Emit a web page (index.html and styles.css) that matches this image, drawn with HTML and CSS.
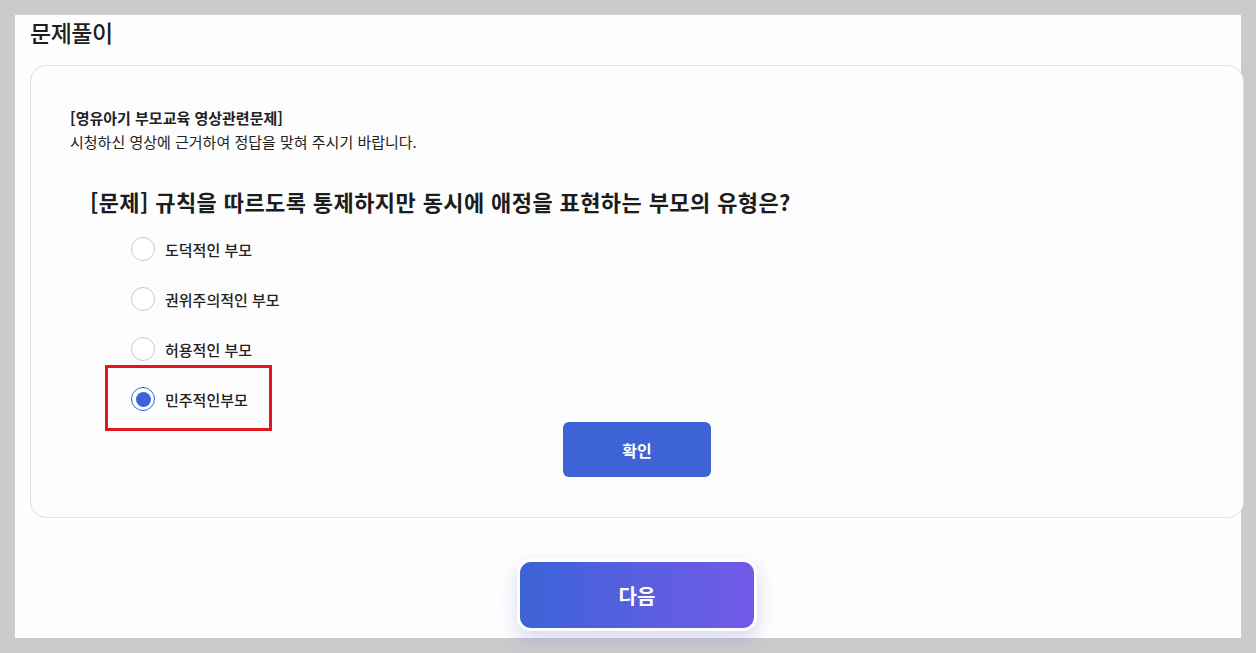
FILE: index.html
```html
<!DOCTYPE html>
<html lang="ko">
<head>
<meta charset="utf-8">
<title>문제풀이</title>
<link rel="stylesheet" href="styles.css">
</head>
<body>
<div class="panel">
  <h1 class="title">문제풀이</h1>
  <section class="card">
    <div class="intro">
      <p class="intro-head">[영유아기 부모교육 영상관련문제]</p>
      <p class="intro-sub">시청하신 영상에 근거하여 정답을 맞혀 주시기 바랍니다.</p>
    </div>
    <h2 class="question">[문제] 규칙을 따르도록 통제하지만 동시에 애정을 표현하는 부모의 유형은?</h2>
    <ul class="options">
      <li class="option"><span class="radio"></span><span class="label">도덕적인 부모</span></li>
      <li class="option"><span class="radio"></span><span class="label">권위주의적인 부모</span></li>
      <li class="option"><span class="radio"></span><span class="label">허용적인 부모</span></li>
      <li class="option selected"><span class="mark"></span><span class="radio"></span><span class="label">민주적인부모</span></li>
    </ul>
    <div class="confirm-row"><button class="confirm">확인</button></div>
  </section>
  <div class="next-row"><button class="next">다음</button></div>
</div>
</body>
</html>
```

FILE: styles.css
```css
* { box-sizing: border-box; }
html, body { margin: 0; padding: 0; }
body {
  background: #cbcbcb;
  padding: 15px;
  font-family: "Noto Sans CJK KR", "Noto Sans", sans-serif;
  color: #222;
}
.panel {
  width: 1226px;
  height: 623px;
  background: #fefefe;
  padding: 0 0 0 15px;
}
.title {
  margin: 0;
  font-size: 23px;
  font-weight: 500;
  line-height: 34px;
  color: #1f1f1f;
  letter-spacing: -0.5px;
}
.card {
  margin-top: 16px;
  width: 1214px;
  height: 453px;
  background: #fdfdfe;
  border: 1px solid #dedede;
  border-radius: 16px;
  padding: 40px 39px 40px 39px;
}
.intro p {
  margin: 0;
  font-size: 15px;
  line-height: 24px;
  color: #222;
}
.intro-head { font-weight: 700; }
.intro-sub { font-weight: 400; }
.question {
  margin: 32px 0 0 20px;
  font-size: 22px;
  line-height: 30px;
  font-weight: 700;
  letter-spacing: 0.4px;
  color: #1c1c1c;
}
.options {
  list-style: none;
  margin: 8px 0 0 0;
  padding: 0 0 0 61px;
}
.option {
  position: relative;
  height: 50px;
  display: flex;
  align-items: center;
  gap: 10px;
}
.radio {
  width: 24px;
  height: 24px;
  border-radius: 50%;
  border: 1px solid #c8c8c8;
  background: #fff;
  display: flex;
  align-items: center;
  justify-content: center;
}
.selected .radio {
  border: 1.5px solid #3c5fd5;
}
.selected .radio::after {
  content: "";
  width: 15px;
  height: 15px;
  border-radius: 50%;
  background: #3b63d9;
}
.label {
  font-size: 15px;
  font-weight: 500;
  color: #222;
}
.mark {
  position: absolute;
  left: -26px;
  top: -9px;
  width: 167px;
  height: 66px;
  border: 3px solid #e3141b;
}
.confirm-row {
  display: flex;
  justify-content: center;
  margin-top: -2px;
}
.confirm {
  width: 148px;
  height: 55px;
  border: none;
  border-radius: 6px;
  background: #3e63d6;
  color: #fff;
  font-family: inherit;
  font-size: 16px;
  font-weight: 700;
}
.next-row {
  width: 1214px;
  display: flex;
  justify-content: center;
  margin-top: 41px;
}
.next {
  width: 240px;
  height: 72px;
  border: 3px solid #fff;
  border-radius: 14px;
  background: linear-gradient(90deg, #3b63d6 0%, #5a5fe0 55%, #725ae8 100%);
  color: #fff;
  font-family: inherit;
  font-size: 20px;
  font-weight: 700;
  box-shadow: 0 8px 20px rgba(110, 100, 220, 0.28);
}
```
